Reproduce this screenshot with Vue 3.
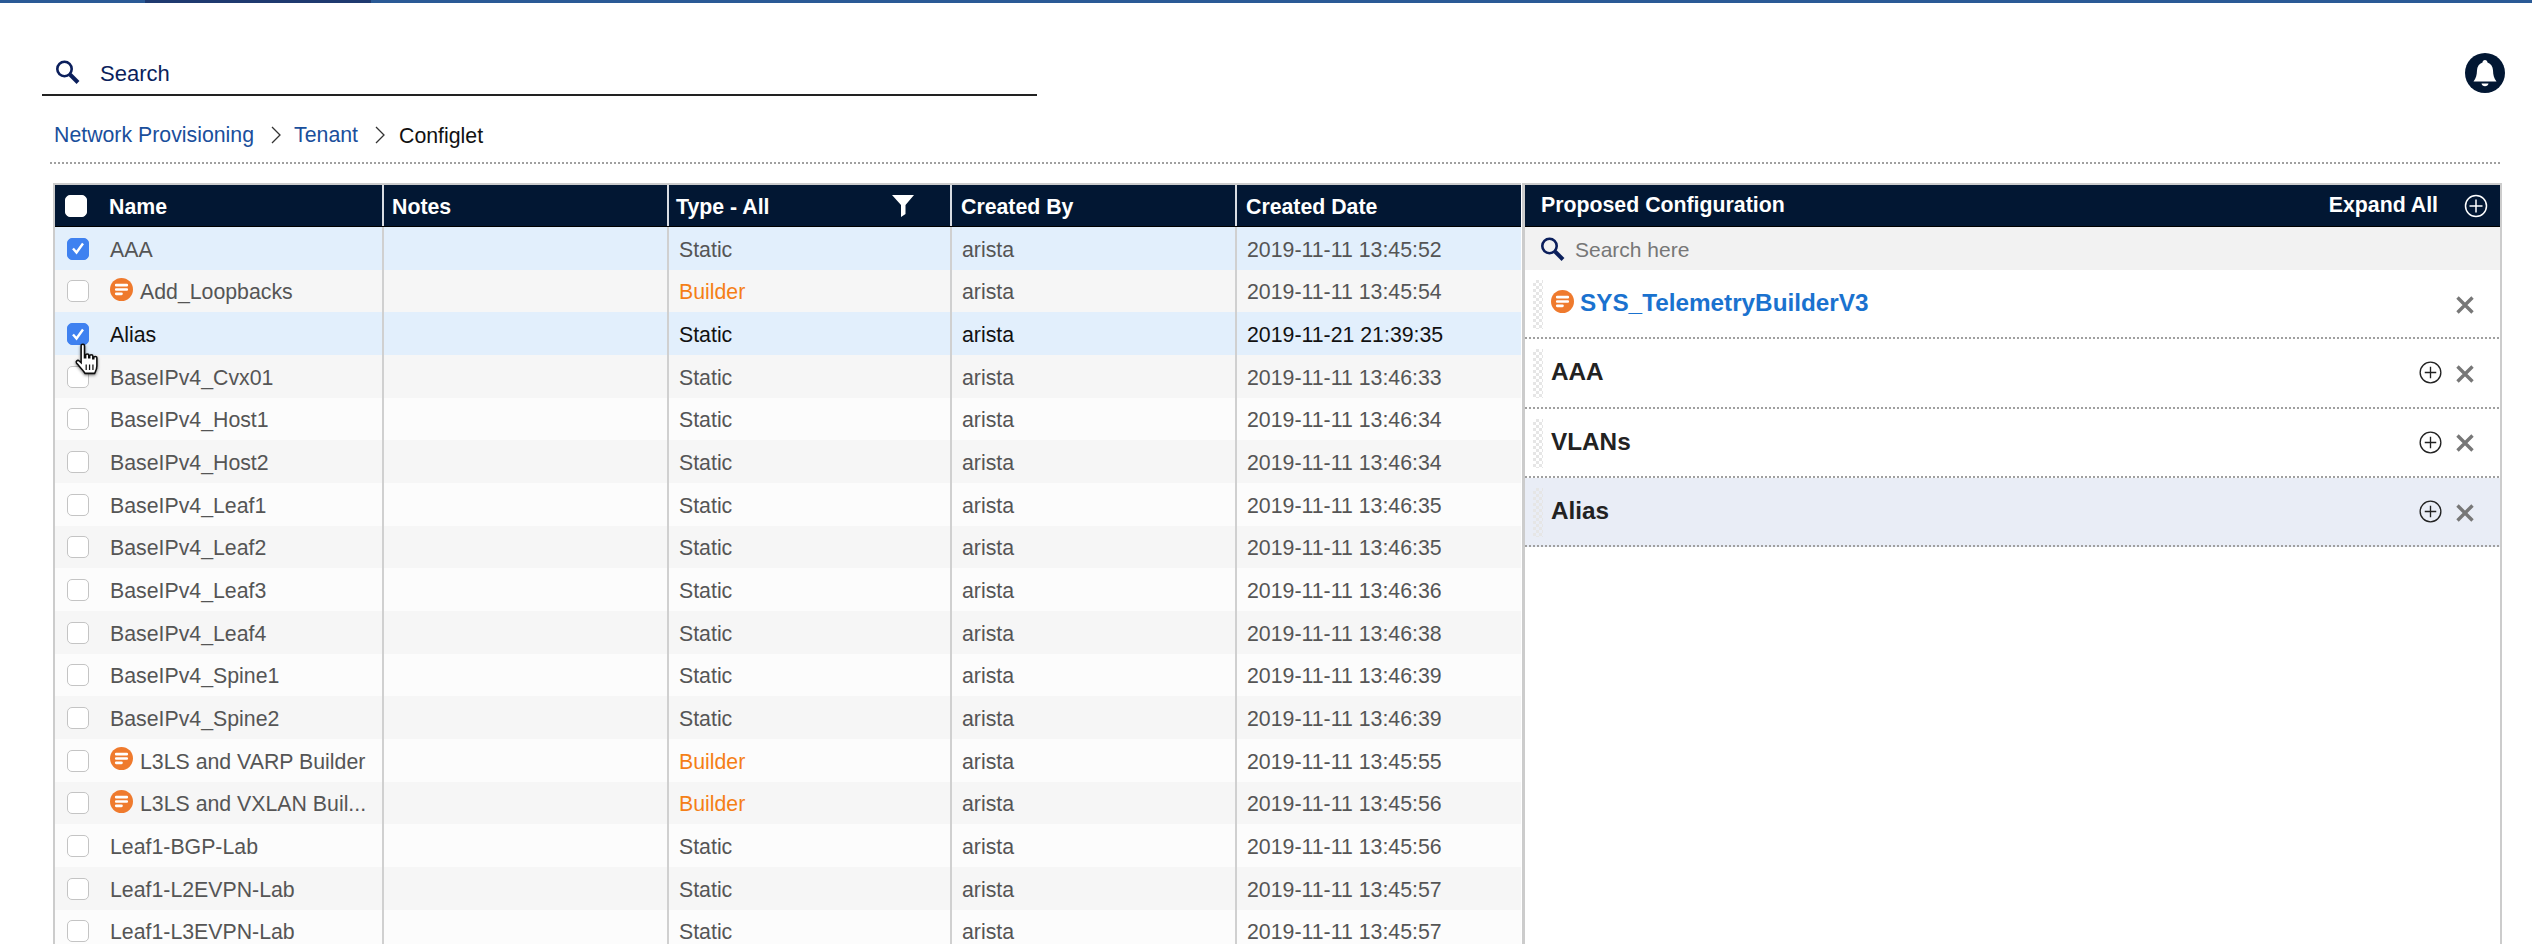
<template>
  <div class="page">
    <div class="topbar"><span class="topbar-dark"></span></div>

    <header class="search-row">
      <div class="search-box">
        <svg class="search-icon" viewBox="0 0 25 24" fill="none" stroke="#0b1f5c">
          <circle cx="9.5" cy="9" r="7.2" stroke-width="2.6" />
          <path d="M15 14.5l8 8" stroke-width="4" />
        </svg>
        <span>Search</span>
      </div>
      <svg class="bell" viewBox="0 0 40 40">
        <circle cx="20" cy="20" r="20" fill="#021733" />
        <path d="M20 7c-1.500 0-2.400 1-2.500 2.400-3.600 1.100-5.300 4-5.500 7.800-.2 5-.9 8-3.500 11.300h23c-2.600-3.300-3.300-6.300-3.500-11.300-.2-3.800-1.900-6.700-5.500-7.800C22.400 8 21.500 7 20 7z" fill="#fff" />
        <path d="M16.500 30.500a3.600 3.600 0 0 0 7 0z" fill="#fff" />
      </svg>
    </header>

    <nav class="crumbs">
      <a>Network Provisioning</a>
      <svg class="chev" viewBox="0 0 10 18" fill="none" stroke="#333" stroke-width="1.300"><path d="M1 1l8 8-8 8" /></svg>
      <a>Tenant</a>
      <svg class="chev" viewBox="0 0 10 18" fill="none" stroke="#333" stroke-width="1.300"><path d="M1 1l8 8-8 8" /></svg>
      <span>Configlet</span>
    </nav>

    <main class="content">
      <section class="table">
        <div class="row head">
          <div class="cell name-cell">
            <span class="box head-box"></span>
            <span>Name</span>
          </div>
          <div class="cell">Notes</div>
          <div class="cell type-head">
            <span>Type - All</span>
            <svg class="filter" viewBox="0 0 22 22"><path d="M0 0h22l-8.500 10v9l-4.500 3V10z" fill="#fff" /></svg>
          </div>
          <div class="cell by-head">Created By</div>
          <div class="cell date-head">Created Date</div>
        </div>

        <div
          v-for="(r, i) in rows"
          :key="r.name"
          class="row"
          :class="{ selected: r.checked, alt: i % 2 === 1, hover: r.name === 'Alias' }"
        >
          <div class="cell name-cell">
            <span class="box" :class="{ checked: r.checked }">
              <svg v-if="r.checked" viewBox="0 0 22 22" fill="none" stroke="#fff" stroke-width="2.400"><path d="M6 11.500l3.500 4L16 6.500" /></svg>
            </span>
            <svg v-if="r.builder" class="builder" viewBox="0 0 24 24">
              <circle cx="12" cy="12" r="12" fill="#ef7a2d" />
              <path d="M6.500 7.500h11M6.500 12h11M6.500 16.500h5.500" stroke="#fff" stroke-width="2.800" stroke-linecap="round" />
            </svg>
            <span class="name-text">{{ r.name }}</span>
          </div>
          <div class="cell"></div>
          <div class="cell" :class="{ orange: r.builder }">{{ r.builder ? 'Builder' : 'Static' }}</div>
          <div class="cell">arista</div>
          <div class="cell date">{{ r.date }}</div>
        </div>

        <svg class="cursor" viewBox="0 0 28 32">
          <defs>
            <filter id="cursor-shadow" x="-30%" y="-30%" width="160%" height="160%">
              <feDropShadow dx="0" dy="1" stdDeviation="1.200" flood-opacity="0.500" />
            </filter>
          </defs>
          <path
            filter="url(#cursor-shadow)"
            d="M7 2.500c0-1.800 3-1.800 3 0V13l1 0V11c0-1.600 2.800-1.600 2.800 0v2h.8v-1.300c0-1.600 2.800-1.600 2.800 0V14h.8v-.8c0-1.600 2.800-1.600 2.800 0v7.300c0 3-1.200 4.500-2 6.500H10.500c-1.500-2.500-4-5-7.500-9-1.200-1.500.8-3.300 2.300-2L7 17.500z"
            fill="#fff"
            stroke="#111"
            stroke-width="1.400"
          />
          <path d="M11.500 19v5M14.500 19v5M17.500 19v5" stroke="#111" stroke-width="1.100" />
        </svg>
      </section>

      <aside class="panel">
        <div class="panel-head">
          <span>Proposed Configuration</span>
          <div class="expand">
            <span>Expand All</span>
            <svg class="plus" viewBox="0 0 24 24" fill="none" stroke="#fff" stroke-width="1.500">
              <circle cx="12" cy="12" r="10.500" />
              <path d="M12 5.500v13M5.500 12h13" />
            </svg>
          </div>
        </div>

        <div class="panel-search">
          <svg class="panel-search-icon" viewBox="0 0 25 24" fill="none" stroke="#0b1f5c">
            <circle cx="9.500" cy="9" r="7.200" stroke-width="2.600" />
            <path d="M15 14.500l8 8" stroke-width="4" />
          </svg>
          <span>Search here</span>
        </div>

        <div
          v-for="item in proposed"
          :key="item.name"
          class="item"
          :class="{ active: item.active }"
        >
          <span class="grip"></span>
          <svg v-if="item.builder" class="item-builder" viewBox="0 0 24 24">
            <circle cx="12" cy="12" r="12" fill="#ef7a2d" />
            <path d="M6.500 7.500h11M6.500 12h11M6.500 16.500h5.500" stroke="#fff" stroke-width="2.800" stroke-linecap="round" />
          </svg>
          <span class="item-name" :class="{ link: item.builder }">{{ item.name }}</span>
          <svg v-if="!item.builder" class="item-plus" viewBox="0 0 24 24" fill="none" stroke="#222" stroke-width="1.400">
            <circle cx="12" cy="12" r="10.800" />
            <path d="M12 6v12M6 12h12" />
          </svg>
          <svg class="item-x" viewBox="0 0 18 18" fill="none" stroke="#777" stroke-width="3.400">
            <path d="M1.500 1.500l15 15M16.500 1.500l-15 15" />
          </svg>
        </div>
      </aside>
    </main>
  </div>
</template>

<script setup>
const rows = [
  { name: 'AAA', date: '2019-11-11 13:45:52', checked: true },
  { name: 'Add_Loopbacks', date: '2019-11-11 13:45:54', builder: true },
  { name: 'Alias', date: '2019-11-21 21:39:35', checked: true },
  { name: 'BaseIPv4_Cvx01', date: '2019-11-11 13:46:33' },
  { name: 'BaseIPv4_Host1', date: '2019-11-11 13:46:34' },
  { name: 'BaseIPv4_Host2', date: '2019-11-11 13:46:34' },
  { name: 'BaseIPv4_Leaf1', date: '2019-11-11 13:46:35' },
  { name: 'BaseIPv4_Leaf2', date: '2019-11-11 13:46:35' },
  { name: 'BaseIPv4_Leaf3', date: '2019-11-11 13:46:36' },
  { name: 'BaseIPv4_Leaf4', date: '2019-11-11 13:46:38' },
  { name: 'BaseIPv4_Spine1', date: '2019-11-11 13:46:39' },
  { name: 'BaseIPv4_Spine2', date: '2019-11-11 13:46:39' },
  { name: 'L3LS and VARP Builder', date: '2019-11-11 13:45:55', builder: true },
  { name: 'L3LS and VXLAN Buil...', date: '2019-11-11 13:45:56', builder: true },
  { name: 'Leaf1-BGP-Lab', date: '2019-11-11 13:45:56' },
  { name: 'Leaf1-L2EVPN-Lab', date: '2019-11-11 13:45:57' },
  { name: 'Leaf1-L3EVPN-Lab', date: '2019-11-11 13:45:57' }
]

const proposed = [
  { name: 'SYS_TelemetryBuilderV3', builder: true },
  { name: 'AAA' },
  { name: 'VLANs' },
  { name: 'Alias', active: true }
]
</script>

<style>
html,
body {
  margin: 0;
  background: #fff;
  overflow: hidden;
}
</style>

<style scoped>
.page {
  height: 944px;
  overflow: hidden;
  display: flex;
  flex-direction: column;
  font-family: "Liberation Sans", Arial, sans-serif;
  font-size: 21.3px;
  color: #555;
}

.topbar {
  height: 3px;
  background: #2a5a96;
  padding-left: 145px;
  flex: none;
}

.topbar-dark {
  display: block;
  width: 226px;
  height: 3px;
  background: #1f3a70;
}

.search-row {
  flex: none;
  height: 94px;
  display: flex;
  align-items: flex-start;
  justify-content: space-between;
  padding: 50px 27px 0 42px;
  box-sizing: border-box;
}

.search-box {
  width: 995px;
  height: 43px;
  box-sizing: border-box;
  border-bottom: 2px solid #222;
  display: flex;
  align-items: flex-start;
  gap: 20px;
  padding: 7px 0 0 13px;
  color: #0b1f5c;
  font-size: 22px;
  line-height: 28px;
}

.search-icon {
  width: 25px;
  height: 24px;
}

.bell {
  width: 40px;
  height: 40px;
}

.crumbs {
  flex: none;
  height: 67px;
  margin: 0 32px 19px 50px;
  box-sizing: border-box;
  padding: 25px 0 0 4px;
  display: flex;
  align-items: flex-start;
  line-height: 26px;
  background: linear-gradient(to right, #a0a0a0 50%, transparent 50%) left bottom / 4px 2px repeat-x;
}

.crumbs a {
  color: #1a4f9c;
}

.crumbs span {
  color: #111;
  margin: 1px 0 0 1px;
}

.chev {
  width: 10px;
  height: 18px;
  margin: 4px 13px 0 17px;
}

.content {
  flex: 1;
  min-height: 0;
  display: flex;
  padding-left: 53px;
  gap: 1px;
}

.table {
  position: relative;
  width: 1468px;
  flex: none;
  box-sizing: border-box;
  border-top: 2px solid #ccc;
  border-left: 2px solid #ccc;
}

.row {
  display: grid;
  grid-template-columns: 329px 285px 283px 285px 284px;
  height: 42.67px;
  background: #fcfcfc;
}

.row.alt {
  background: #f6f6f6;
}

.row.selected {
  background: #e2effc;
}

.row.hover {
  color: #111;
}

.row.head {
  height: 42px;
  background: #021733;
  color: #fff;
  font-weight: 700;
  border-bottom: 1px solid #000;
  box-sizing: border-box;
}

.cell {
  display: flex;
  align-items: center;
  min-width: 0;
  padding: 4px 0 0 10px;
  box-sizing: border-box;
  border-right: 2px solid #d0d0d0;
}

.cell:last-child {
  border-right: none;
}

.head .cell {
  padding-top: 3px;
  padding-left: 8px;
  border-right-color: #d8dce2;
}

.name-cell {
  padding-left: 12px;
  padding-right: 12px;
}

.head .name-cell {
  padding-left: 10px;
}

.head .type-head {
  justify-content: space-between;
  padding-left: 7px;
  padding-right: 36px;
}

.head .by-head,
.head .date-head {
  padding-left: 9px;
}

.filter {
  width: 22px;
  height: 22px;
  margin-top: -3px;
}

.orange {
  color: #f57f17;
}

.box {
  flex: none;
  width: 22px;
  height: 22px;
  box-sizing: border-box;
  border: 1.500px solid #c4c4c4;
  border-radius: 5px;
  background: #fff;
  margin: -3px 21px 0 0;
}

.box svg {
  display: block;
  width: 22px;
  height: 22px;
  margin: -1.500px;
}

.box.checked {
  background: #3f81f0;
  border-color: #3f81f0;
}

.head-box {
  border-color: #fff;
  margin-right: 22px;
}

.builder {
  flex: none;
  width: 23px;
  height: 23px;
  margin: -7px 7px 0 0;
}

.name-text {
  white-space: nowrap;
}

.cursor {
  position: absolute;
  left: 18px;
  top: 158px;
  width: 32px;
  height: 36px;
}

.panel {
  width: 980px;
  flex: none;
  box-sizing: border-box;
  border-top: 2px solid #ccc;
  border-left: 3px solid #ccc;
  border-right: 2px solid #ccc;
}

.panel-head {
  height: 42px;
  box-sizing: border-box;
  background: #021733;
  border-bottom: 1px solid #000;
  color: #fff;
  font-weight: 700;
  display: flex;
  align-items: center;
  justify-content: space-between;
  padding: 0 12px 0 16px;
}

.expand {
  display: flex;
  align-items: center;
  gap: 26px;
}

.plus {
  width: 24px;
  height: 24px;
}

.panel-search {
  height: 43px;
  box-sizing: border-box;
  background: #f2f2f2;
  display: flex;
  align-items: center;
  gap: 10px;
  padding-left: 15px;
  color: #777;
  font-size: 21px;
}

.panel-search span {
  padding-top: 3px;
}

.panel-search-icon {
  width: 25px;
  height: 24px;
}

.item {
  height: 69.300px;
  box-sizing: border-box;
  display: flex;
  align-items: center;
  padding: 0 26px 0 8px;
  color: #222;
  font-size: 24.300px;
  font-weight: 700;
  background: linear-gradient(to right, #a0a0a0 50%, transparent 50%) left bottom / 4px 2px repeat-x;
}

.item.active {
  background-color: #e9edf6;
}

.grip {
  flex: none;
  width: 10px;
  height: 49px;
  margin-right: 8px;
  background: repeating-conic-gradient(#e6e6e6 0 25%, transparent 0 50%) 0 0 / 6px 6px;
}

.item-builder {
  flex: none;
  width: 23px;
  height: 23px;
  margin: -6px 6px 0 0;
}

.item-name {
  flex: 1;
  padding-bottom: 3px;
}

.item-name.link {
  color: #1a72cf;
}

.item-plus {
  width: 23px;
  height: 23px;
  margin: -2px 14px 0 0;
}

.item-x {
  width: 18px;
  height: 18px;
}
</style>
